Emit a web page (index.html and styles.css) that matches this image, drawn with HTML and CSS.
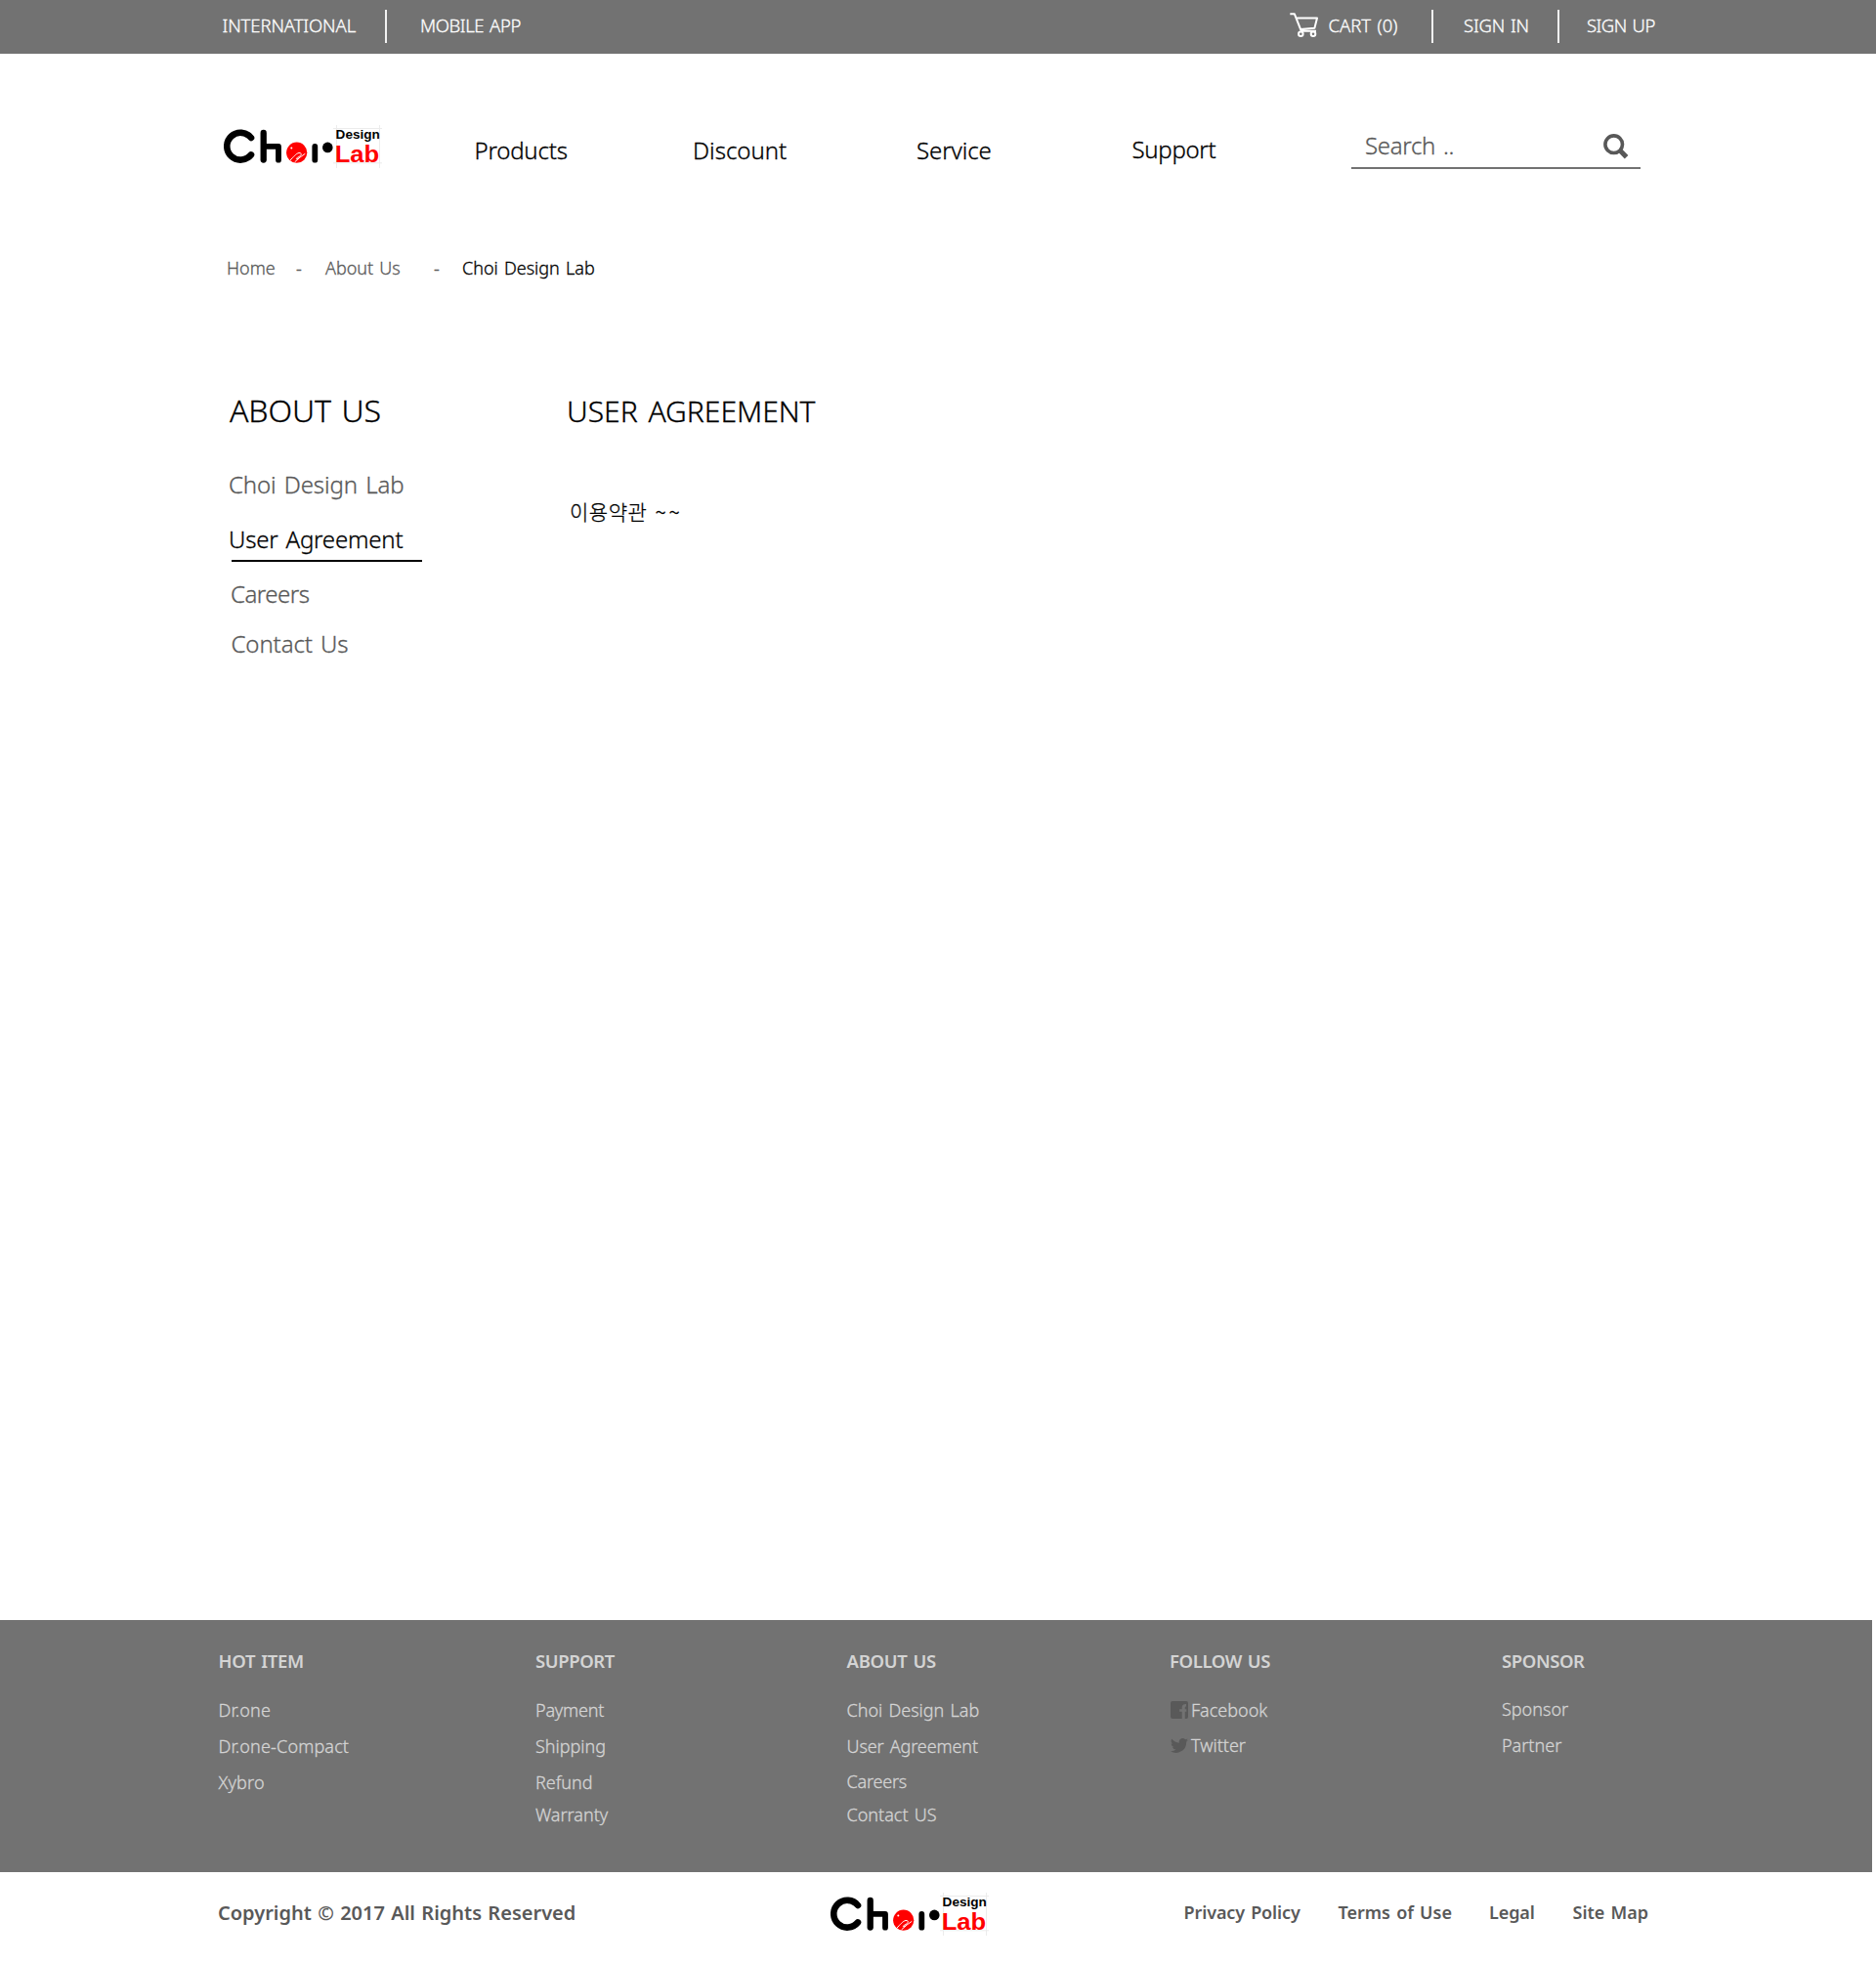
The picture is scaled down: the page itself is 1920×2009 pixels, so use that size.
FILE: index.html
```html
<!DOCTYPE html>
<html lang="en">
<head>
<meta charset="utf-8">
<title>Choi Design Lab - User Agreement</title>
<link rel="stylesheet" href="styles.css">
</head>
<body>
<div class="topbar">
  <a class="tight-1">INTERNATIONAL</a>
  <i class="divider"></i>
  <a class="tight-4">MOBILE APP</a>
  <svg class="cart" viewBox="0 0 30 27" fill="none" stroke="#fff" stroke-width="2" stroke-linejoin="round">
    <path d="M.3 2.200H4.800L11.800 19.800H27M6.700 6.500H28L25.400 16.800L10.800 18"/>
    <circle cx="11.300" cy="22.700" r="2.300"/><circle cx="24" cy="22.700" r="2.300"/>
  </svg>
  <a>CART (0)</a>
  <i class="divider"></i>
  <a class="tight-2">SIGN IN</a>
  <i class="divider"></i>
  <a class="tight-5">SIGN UP</a>
</div>

<header class="header">
  <svg class="logo" viewBox="0 0 162 46">
    <g id="logo">
      <path d="M115.500 0V44M159.500 0V44M112 3.500H162M112 38.800H162" stroke="#ececec" stroke-width="1" fill="none"/>
      <g fill="none" stroke="#000" stroke-linecap="round">
        <path d="M28 13A13.900 13.900 0 1 0 28 30.400" stroke-width="6.600"/>
        <path d="M40.700 7.900V35.500" stroke-width="6.300"/>
        <path d="M41 21.900H56V35.700" stroke-width="5.800" stroke-linejoin="round"/>
        <path d="M93.300 22V35.700" stroke-width="5.800"/>
      </g>
      <circle cx="106.300" cy="22.900" r="5.300"/>
      <circle cx="74.700" cy="28.200" r="10.600" fill="#f00"/>
      <path d="M68 36C71 33 74 29 77 28.500S80 31 77 32.500S73 35 76 34.500L83 29.500M73 37.500L77 34" fill="none" stroke="#fff" stroke-width="1" stroke-linecap="round"/>
      <circle cx="69.300" cy="23.400" r="1" fill="#fff"/>
      <text x="114.600" y="13.700" class="logo-design" textLength="45.200" lengthAdjust="spacingAndGlyphs">Design</text>
      <text x="113.700" y="38.200" class="logo-lab" textLength="45.500" lengthAdjust="spacingAndGlyphs">Lab</text>
    </g>
  </svg>
  <a class="nav-link tight-2">Products</a>
  <a class="nav-link">Discount</a>
  <a class="nav-link tight-1">Service</a>
  <a class="nav-link raised tight-3">Support</a>
  <div class="search">
    <span class="tight-3">Search ..</span>
    <svg class="search-icon" viewBox="0 0 26 26" fill="none" stroke="#585858">
      <circle cx="10.700" cy="10.700" r="8.800" stroke-width="3.600"/>
      <path d="M17.500 17.500L23.600 23.800" stroke-width="5"/>
    </svg>
  </div>
</header>

<nav class="crumbs">
  <a>Home</a><span>-</span><a>About Us</a><span>-</span><b>Choi Design Lab</b>
</nav>

<main class="content">
  <aside class="side">
    <h2 class="tight-1">ABOUT US</h2>
    <a class="side-link tight-1">Choi Design Lab</a>
    <a class="side-link current tight-2">User Agreement</a>
    <a class="side-link careers tight-5">Careers</a>
    <a class="side-link contact tight-1">Contact Us</a>
  </aside>
  <section class="article">
    <h1>USER AGREEMENT</h1>
    <p>이용약관 <span class="tildes">~~</span></p>
  </section>
</main>

<footer class="footer">
  <div class="col">
    <h3 class="tight-3">HOT ITEM</h3>
    <a class="wide">Dr.one</a><a class="wide">Dr.one-Compact</a><a class="wide">Xybro</a>
  </div>
  <div class="col">
    <h3 class="tight-4">SUPPORT</h3>
    <a class="tight-2">Payment</a><a>Shipping</a><a>Refund</a><a class="close">Warranty</a>
  </div>
  <div class="col">
    <h3 class="tight-3">ABOUT US</h3>
    <a>Choi Design Lab</a><a class="tight-1">User Agreement</a><a class="snug tight-2">Careers</a><a class="near">Contact US</a>
  </div>
  <div class="col">
    <h3 class="tight-4">FOLLOW US</h3>
    <a class="social">
      <svg class="facebook" viewBox="0 0 18 18"><path fill="#595959" fill-rule="evenodd" d="M2 0H16Q18 0 18 2V16Q18 18 16 18H14.800V10.800H16.300V8.200H14.800V6.500Q14.800 5.500 16 5.500V3Q11.700 2.700 11.700 6.500V8.200H9.200V10.800H11.700V18H2Q0 18 0 16V2Q0 0 2 0Z"/></svg>
      <span>Facebook</span>
    </a>
    <a class="social snug">
      <svg class="twitter" viewBox="0 0 24 20"><path fill="#595959" d="M24 2.400a10 10 0 0 1-2.800.8A5 5 0 0 0 23.300.500a10 10 0 0 1-3.100 1.200A4.900 4.900 0 0 0 11.800 6.200 14 14 0 0 1 1.700 1 4.900 4.900 0 0 0 3.200 7.600 5 5 0 0 1 1 7v.1a4.900 4.900 0 0 0 3.900 4.800 5 5 0 0 1-2.200.1 4.900 4.900 0 0 0 4.600 3.400A9.900 9.900 0 0 1 0 17.500 14 14 0 0 0 21.500 5z"/></svg>
      <span>Twitter</span>
    </a>
  </div>
  <div class="col">
    <h3 class="tight-4">SPONSOR</h3>
    <a class="snug">Sponsor</a><a>Partner</a>
  </div>
</footer>

<div class="legal">
  <p>Copyright © 2017 All Rights Reserved</p>
  <svg class="logo" viewBox="0 0 162 46"><use href="#logo"/></svg>
  <a class="tight-1">Privacy Policy</a>
  <a>Terms of Use</a>
  <a class="tight-1">Legal</a>
  <a>Site Map</a>
</div>
</body>
</html>
```
FILE: styles.css
```css
* { box-sizing: border-box; }
body {
  margin: 0;
  width: 1920px;
  height: 2009px;
  display: flex;
  flex-direction: column;
  background: #fff;
  color: #000;
  font: 300 18px/24px "Noto Sans", "Noto Sans CJK KR", sans-serif;
  -webkit-text-stroke: .3px currentColor;
  word-spacing: 1.5px;
  white-space: nowrap;
}
h1, h2, h3, p { margin: 0; font-weight: inherit; }
svg { display: block; -webkit-text-stroke: 0; }

.wide { letter-spacing: .15px; }
.tight-1 { letter-spacing: -.1px; }
.tight-2 { letter-spacing: -.2px; }
.tight-3 { letter-spacing: -.3px; }
.tight-4 { letter-spacing: -.4px; }
.tight-5 { letter-spacing: -.5px; }

.topbar {
  height: 55px;
  padding: 0 0 2px 227.5px;
  display: grid;
  grid-template-columns: 166.5px 36px 889.5px 40px 105px 33.5px 95.5px 30.5px auto;
  align-items: center;
  background: #727272;
  color: #fff;
  font-size: 18.5px;
}
.topbar a { margin-top: -2px; }
.divider { width: 2px; height: 34px; margin-top: 1px; background: #f2f2f2; }
.cart { width: 30px; height: 27px; margin-top: -2px; }

.header {
  padding: 72px 0 0 229px;
  height: 118px;
  display: grid;
  grid-template-columns: 256.5px 223.5px 229px 220.5px 224.5px 296px;
  font-size: 24px;
  line-height: 32px;
  word-spacing: 2px;
}
.logo { width: 162px; height: 46px; margin-top: 1px; }
.logo-design { font: bold 13.6px "Liberation Sans", sans-serif; word-spacing: 0; }
.logo-lab { font: bold 24.6px "Liberation Sans", sans-serif; fill: #f00; word-spacing: 0; }
.nav-link { margin-top: 11px; }
.nav-link.raised { margin-top: 10px; }
.search {
  height: 46px;
  padding: 6px 12px 0 14px;
  display: flex;
  justify-content: space-between;
  border-bottom: 2px solid #727272;
  color: #595959;
}
.search-icon { width: 26px; height: 26px; margin-top: 4px; }

.crumbs {
  margin-top: 89px;
  padding-left: 232px;
  display: grid;
  grid-template-columns: 71px 30px 111px 29px auto;
  color: #595959;
}
.crumbs b { font-weight: 300; color: #000; }

.content {
  flex: 1;
  padding: 112px 0 0 234px;
  display: grid;
  grid-template-columns: 346px auto;
}
.side { display: flex; flex-direction: column; font-size: 24px; line-height: 32px; word-spacing: 2px; }
.side h2 { margin-left: 1px; font-size: 32px; line-height: 44px; word-spacing: 2.5px; }
.side-link { margin-top: 38px; color: #595959; }
.side-link.current { margin-top: 24px; color: #000; }
.current::after { content: ""; display: block; width: 195px; height: 2px; margin: 5px 0 0 3px; background: #000; }
.side-link.careers { margin: 17px 0 0 2px; }
.side-link.contact { margin: 19px 0 0 2.5px; }
.article h1 { margin-top: 1px; font-size: 30px; line-height: 44px; word-spacing: 3px; }
.article p {
  margin: 65px 0 0 3px;
  font-family: "Noto Sans CJK KR", sans-serif;
  font-size: 21px;
  line-height: 30px;
  letter-spacing: .5px;
  word-spacing: 3px;
}
.tildes { letter-spacing: 2.8px; }

.footer {
  width: 1916px;
  height: 258px;
  padding: 29px 0 0 223.5px;
  display: grid;
  grid-template-columns: 324.5px 318.5px 330.5px 340px auto;
  background: #727272;
  color: #d4d4d4;
}
.col { display: flex; flex-direction: column; }
.col h3 { margin-bottom: 13px; font-size: 18.5px; line-height: 25px; font-weight: 600; -webkit-text-stroke: 0; }
.col a { margin-top: 13px; }
.col .snug { margin-top: 12px; }
.col .close { margin-top: 9px; }
.col .near { margin-top: 10px; }
.social { display: flex; gap: 3px; padding-left: 1px; }
.facebook { width: 18px; height: 18px; margin-top: 3px; }
.twitter { width: 18px; height: 15px; margin-top: 5px; }

.legal {
  height: 93px;
  padding: 20px 0 0 223px;
  display: grid;
  grid-template-columns: 627px 361.5px 158px 154.5px 85.5px auto;
  font-weight: 600;
  -webkit-text-stroke: 0;
  color: #595959;
}
.legal p { margin-top: 8px; font-size: 20px; line-height: 27px; word-spacing: 1.1px; }
.legal a { margin-top: 9px; }
```
